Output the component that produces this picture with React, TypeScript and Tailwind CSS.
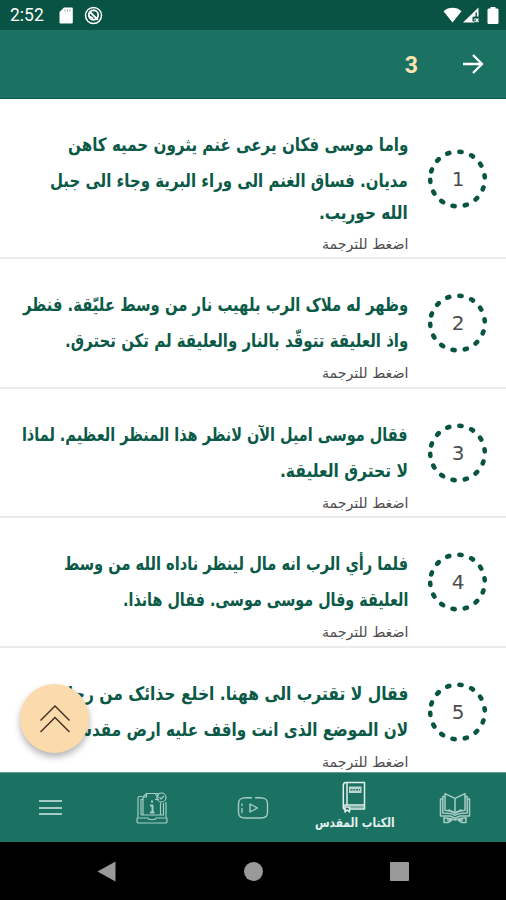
import React, { useLayoutEffect, useRef, useState } from 'react';

type Line = { text: string; width: number };
type Verse = { number: number; lines: Line[] };

const verses: Verse[] = [
  {
    number: 1,
    lines: [
      { text: 'واما موسى فكان يرعى غنم يثرون حميه كاهن', width: 340 },
      { text: 'مديان. فساق الغنم الى وراء البرية وجاء الى جبل', width: 358 },
      { text: 'الله حوريب.', width: 89 },
    ],
  },
  {
    number: 2,
    lines: [
      { text: 'وظهر له ملاک الرب بلهيب نار من وسط عليّقة. فنظر', width: 385 },
      { text: 'واذ العليقة تتوقّد بالنار والعليقة لم تكن تحترق.', width: 343 },
    ],
  },
  {
    number: 3,
    lines: [
      { text: 'فقال موسى اميل الآن لانظر هذا المنظر العظيم. لماذا', width: 386 },
      { text: 'لا تحترق العليقة.', width: 128 },
    ],
  },
  {
    number: 4,
    lines: [
      { text: 'فلما رأي الرب انه مال لينظر ناداه الله من وسط', width: 344 },
      { text: 'العليقة وقال موسى موسى. فقال هانذا.', width: 285 },
    ],
  },
  {
    number: 5,
    lines: [
      { text: 'فقال لا تقترب الى ههنا. اخلع حذائک من رجليک', width: 363 },
      { text: 'لان الموضع الذى انت واقف عليه ارض مقدسة.', width: 346 },
    ],
  },
];

const FitText = ({ text, width, className }: Line & { className: string }) => {
  const ref = useRef<HTMLSpanElement>(null);
  const [scale, setScale] = useState(1);

  useLayoutEffect(() => {
    if (ref.current) setScale(width / ref.current.offsetWidth);
  }, [width]);

  return (
    <div className={className}>
      <span ref={ref} className="inline-block whitespace-nowrap origin-right" style={{ transform: `scaleX(${scale})` }}>
        {text}
      </span>
    </div>
  );
};

const VerseBadge = ({ number }: { number: number }) => (
  <div className="relative flex h-[60px] w-[60px] shrink-0 items-center justify-center">
    <svg className="absolute inset-0" width="60" height="60" viewBox="0 0 60 60" fill="none">
      <circle cx="29.500" cy="30" r="27.3" pathLength="360" stroke="#075442" strokeWidth="4.6" strokeLinecap="round" strokeDasharray="4.500 21.500" transform="rotate(196 29.5 30)" />
    </svg>
    <span className="relative font-['DejaVu_Sans'] text-[20px] leading-none text-[#4c4c4c]">{number}</span>
  </div>
);

const VerseRow = ({ verse }: { verse: Verse }) => (
  <article className={`flex shrink-0 border-b-2 border-[#ebebeb] pr-[18px] ${verse.lines.length === 3 ? 'h-[160px]' : 'h-[129.5px]'}`}>
    <div className={`w-[60px] shrink-0 ${verse.lines.length === 3 ? 'pt-[50px]' : 'pt-[34px]'}`}>
      <VerseBadge number={verse.number} />
    </div>
    <div className="mr-5 min-w-0 flex-1 pt-7">
      {verse.lines.map((line, i) => (
        <FitText
          key={i}
          {...line}
          className={`font-['DejaVu_Sans',sans-serif] text-[18.5px] font-bold text-[#0b5a47] ${i === 2 ? 'h-[31px] leading-[28px]' : 'h-9 leading-9'}`}
        />
      ))}
      <FitText text="اضغط للترجمة" width={86} className="h-6 font-['DejaVu_Sans',sans-serif] text-[14px] leading-[28px] text-[#4c4c4c]" />
    </div>
  </article>
);

const BookOpenIcon = () => (
  <svg width="32" height="32" viewBox="0 0 32 32" fill="none" stroke="currentColor" strokeWidth="1.500" strokeLinejoin="round">
    <path d="M16 6.500C13 4.500 10 3.500 6 1.800v16.500c4 .7 7.500 1 10 3.200 2.500-2.200 6-2.500 10-3.200V1.800C22 3.500 19 4.500 16 6.500Zm0 0v15" />
    <path d="M6 4.500H3.800v16.500c5 0 9 .3 12.200 2.500 3.200-2.200 7.200-2.500 12.200-2.500V4.500H26" />
    <path d="M3.500 7H1.500v17h9.500l5 2.300 5-2.300h9.500V7h-2" />
    <path d="M5 25v5.500h4l4-2.500M27 25v5.500h-4L19 28M5 26c4-.5 7 .5 11 2 4-1.500 7-2.500 11-2M8 28h4M20 28h4" />
    <path d="M9.500 17.500c1.500 1.500 4 2 6.500 3.500 2.500-1.500 5-2 6.500-3.500" />
  </svg>
);

const BookIcon = () => (
  <svg width="26" height="32" viewBox="0 0 26 32" fill="none" stroke="currentColor" strokeWidth="1.5" strokeLinejoin="round">
    <path d="M5 1.500h18.500V28H9M5 1.500C3 1.500 2.300 2.500 2.300 4.500V26M6 1.500V24M23.500 24H5c-2 0-2.700 1-2.700 2.500S3 28.500 5 28.500" />
    <path d="M4 26h4.500v5L6.200 29 4 31Z" />
    <path d="M9 26h14" strokeWidth="1" />
    <rect x="8" y="5.500" width="12.500" height="6.500" fill="currentColor" stroke="none" opacity=".8" />
    <path d="M9.500 8.700h9.500" stroke="#1b7262" strokeDasharray="2 .8" strokeWidth="1.500" />
  </svg>
);

const VideoIcon = () => (
  <svg width="32" height="24" viewBox="0 0 32 24" fill="none" stroke="currentColor" strokeWidth="1.400" strokeLinecap="round" strokeLinejoin="round">
    <path d="M14.500 1.800H9C4 1.800 1.500 3 1.500 8v8.500c0 4 2 5.500 6.500 5.500h16c4.500 0 6.500-1.500 6.500-5.500V8c0-5-2.500-6.200-7.500-6.200h-4.500" />
    <path d="M5 8v1.500M5 12.500v4M13 8v8l7.500-4Z" />
  </svg>
);

const LaptopInfoIcon = () => (
  <svg width="32" height="32" viewBox="0 0 32 32" fill="none" stroke="currentColor" strokeWidth="1.200" strokeLinejoin="round">
    <path d="M6 4.500H3.500C2.500 4.500 2 5 2 6v19.500M30 10v15.500M5 23V7.500h2M27.500 11v12H5" />
    <path d="M7 23V5l3.500-3.500H22M10.500 1.500V5H7M24.500 10.500V23" />
    <circle cx="25.500" cy="5.500" r="4.500" />
    <path d="M23.500 5.500 25 7l3-3M19 3h4M20 5h3M19 7.500h4" />
    <path d="M1 26h11l1 1.500h6l1-1.500h11v3c0 1.500-.5 2-2 2H3c-1.500 0-2-.5-2-2Z" />
    <path d="M15 9.500h2M14 13.500h2.500v6.500M14 20.500h4.500" strokeWidth="2" />
  </svg>
);

const App = () => {
  return (
    <div dir="rtl" className="flex h-[900px] w-[506px] flex-col overflow-hidden bg-white">
      {/* Status bar */}
      <div dir="ltr" className="flex h-[30px] shrink-0 items-center bg-[#085343] pl-[10px] pr-[7px] text-white">
        <span className="mt-[1px] w-[49px] font-['Roboto'] text-[17.500px] leading-none">2:52</span>
        <svg width="14" height="17" viewBox="0 0 14 17">
          <path d="M5 .5h7.500c.8 0 1.300.5 1.300 1.300v13.400c0 .8-.5 1.300-1.300 1.300H1.800C1 16.500.5 16 .5 15.200V5Z" fill="#fff" />
          <path d="M6 2.500v2M8.500 2.500v2M11 2.500v2" stroke="#085343" strokeWidth="1" opacity=".5" />
        </svg>
        <svg className="ml-[11px]" width="19" height="19" viewBox="0 0 19 19" fill="none" stroke="#fff">
          <circle cx="9.500" cy="9.500" r="8" strokeWidth="1.500" />
          <circle cx="9.500" cy="9" r="4.700" strokeWidth="1.900" />
          <path d="m6 6 8 8M6 10.500l3 2" strokeWidth="1.800" />
        </svg>
        <svg className="ml-auto" width="19" height="16" viewBox="0 0 19 16">
          <path d="M.5 4.300C5.500-.3 13.500-.3 18.500 4.300L9.500 15.500Z" fill="#fff" />
        </svg>
        <svg className="ml-[1px]" width="17" height="16" viewBox="0 0 17 16">
          <path d="M15.500.5v9h-4v6H0Z" fill="#fff" />
          <path d="M13.200 5.500v5h-3v4" stroke="#085343" strokeWidth="1.400" fill="none" />
          <path d="m12.500 11.500 3 3.500m0-3.500-3 3.500" stroke="#fff" strokeWidth="1.300" />
        </svg>
        <svg className="ml-[7px]" width="12" height="17" viewBox="0 0 12 17">
          <path d="M3.500 0h5v1.500H10c1 0 1.500.5 1.500 1.500v12.500c0 1-.5 1.500-1.500 1.500H2C1 17 .5 16.500.5 15.500V3C.5 2 1 1.500 2 1.500h1.500Z" fill="#fff" />
        </svg>
      </div>

      {/* App bar */}
      <header className="flex h-[69px] shrink-0 items-center border-b border-[#0c5b4a] bg-[#1b7262] pr-[22px]">
        <svg className="mt-[-1px]" width="22" height="22" viewBox="0 0 22 22" fill="none" stroke="#fff" strokeWidth="2.300">
          <path d="M1 11h18.500M11 2l9 9-9 9" />
        </svg>
        <h1 className="mr-[44px] mt-[3px] font-['Roboto'] text-[23px] font-bold leading-none text-[#fbe2b2]">3</h1>
      </header>

      {/* Verses */}
      <main className="relative flex min-h-0 flex-1 flex-col">
        <div className="flex min-h-0 flex-1 flex-col overflow-hidden">
          {verses.map((verse) => (
            <VerseRow key={verse.number} verse={verse} />
          ))}
        </div>
        <button className="absolute bottom-[19px] left-5 flex h-[69px] w-[69px] items-center justify-center rounded-full bg-[#fbdbab] shadow-[0_4px_7px_rgba(0,0,0,0.3)]">
          <svg width="32" height="30" viewBox="0 0 32 30" fill="none" stroke="#3d2a22" strokeWidth="1.400">
            <path d="M1.500 16.500 16 2l14.500 14.500M1.500 28 16 13.500 30.500 28" />
          </svg>
        </button>
      </main>

      {/* Bottom tabs */}
      <nav className="grid h-[70px] shrink-0 grid-cols-5 border-t border-[#65a095] bg-[#1b7262] text-[#a6cbc4]">
        <div className="flex items-center justify-center">
          <BookOpenIcon />
        </div>
        <div className="flex flex-col items-center pt-2 text-[#e3efec]">
          <BookIcon />
          <FitText text="الكتاب المقدس" width={80} className="flex h-5 w-20 justify-start font-['DejaVu_Sans',sans-serif] text-[13px] font-bold leading-5" />
        </div>
        <div className="flex items-center justify-center">
          <VideoIcon />
        </div>
        <div className="flex items-center justify-center">
          <LaptopInfoIcon />
        </div>
        <div className="flex flex-col items-center justify-center gap-[4.500px]">
          <span className="h-[2px] w-[23px] bg-current" />
          <span className="h-[2px] w-[23px] bg-current" />
          <span className="h-[2px] w-[23px] bg-current" />
        </div>
      </nav>

      {/* System navigation */}
      <div dir="ltr" className="flex h-[58px] shrink-0 items-center justify-between bg-black pl-[97px] pr-[97px]">
        <svg width="19" height="21" viewBox="0 0 19 21">
          <path d="M.5 10.500 18.500.5v20Z" fill="#999" />
        </svg>
        <span className="h-[19px] w-[19px] rounded-full bg-[#999]" />
        <span className="h-[19px] w-[19px] rounded-[1px] bg-[#999]" />
      </div>
    </div>
  );
};

export default App;
